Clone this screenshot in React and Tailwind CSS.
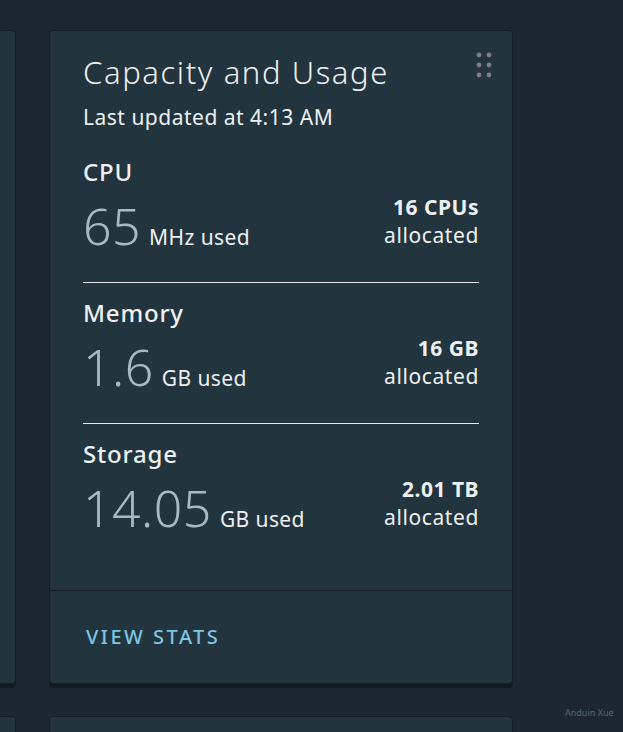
import React from 'react';

const stats = [
  { label: 'CPU', value: '65', unit: 'MHz used', total: '16 CPUs' },
  { label: 'Memory', value: '1.6', unit: 'GB used', total: '16 GB' },
  { label: 'Storage', value: '14.05', unit: 'GB used', total: '2.01 TB' },
];

function Grip() {
  return (
    <svg width="16" height="26" viewBox="0 0 16 26" className="text-[#7b7f83]">
      {[3, 13, 23].map((y) => (
        <g key={y} fill="currentColor">
          <circle cx="3" cy={y} r="2.4" />
          <circle cx="13" cy={y} r="2.4" />
        </g>
      ))}
    </svg>
  );
}

function StatRow({ stat, first, last }) {
  return (
    <div
      className={`${first ? 'pt-[27px]' : 'pt-[15px]'} ${last ? '' : 'pb-[31px] border-b border-[#e6e8ea]'}`}
    >
      <div className="text-[24px] font-medium leading-[30px] tracking-[0.8px] text-[#eef0f2]">{stat.label}</div>
      <div className="mt-[14px] h-[50px] flex items-end justify-between">
        <div className="flex items-baseline gap-[8px]">
          <span className="text-[50px] font-light leading-[50px] tracking-[0.5px] text-[#a9b8c1]">{stat.value}</span>
          <span className="text-[21px] leading-[28px] tracking-[0.4px] text-[#eef0f2]">{stat.unit}</span>
        </div>
        <div className="mb-[2px] text-right leading-[28px] tracking-[0.5px]">
          <div className="text-[21px] font-bold text-[#eef0f2]">{stat.total}</div>
          <div className="text-[21px] tracking-[0.6px] text-[#eef0f2]">allocated</div>
        </div>
      </div>
    </div>
  );
}

export default function App() {
  return (
    <div
      className="relative h-[732px] overflow-hidden bg-[#1c2731] pt-[30px]"
      style={{ fontFamily: '"Noto Sans", sans-serif' }}
    >
      <div className="flex gap-[33px]">
        <div className="w-[16px] h-[654px] rounded-tr-[4px] rounded-br-[4px] border border-l-0 border-[#151e26] bg-[#22343d] shadow-[0_4px_0_#121b21]" />
        <div className="relative w-[464px] h-[654px] flex flex-col rounded-[4px] border border-[#151e26] bg-[#22343d] shadow-[0_4px_0_#121b21]">
          <div className="absolute top-[21px] right-[20px]">
            <Grip />
          </div>
          <div className="flex-1 px-[33px] pt-[22px]">
            <h1 className="text-[31px] font-light leading-[38px] tracking-[1.6px] text-[#eef0f2]">Capacity and Usage</h1>
            <div className="mt-[13px] text-[21px] leading-[26px] tracking-[0.5px] text-[#eef0f2]">Last updated at 4:13 AM</div>
            {stats.map((s, i) => (
              <StatRow key={s.label} stat={s} first={i === 0} last={i === stats.length - 1} />
            ))}
          </div>
          <div className="h-[93px] border-t border-[#151e26] px-[36px] flex items-center">
            <span className="text-[20px] font-medium tracking-[2.5px] text-[#7cc5e4]">VIEW STATS</span>
          </div>
        </div>
      </div>
      <div className="mt-[32px] flex gap-[33px]">
        <div className="w-[16px] h-[60px] rounded-tr-[4px] border border-l-0 border-[#151e26] bg-[#22343d]" />
        <div className="w-[464px] h-[60px] rounded-[4px] border border-[#151e26] bg-[#22343d]" />
      </div>
      <div className="absolute left-[565px] top-[706px] text-[9px] text-[#59656e]">Anduin Xue</div>
    </div>
  );
}
